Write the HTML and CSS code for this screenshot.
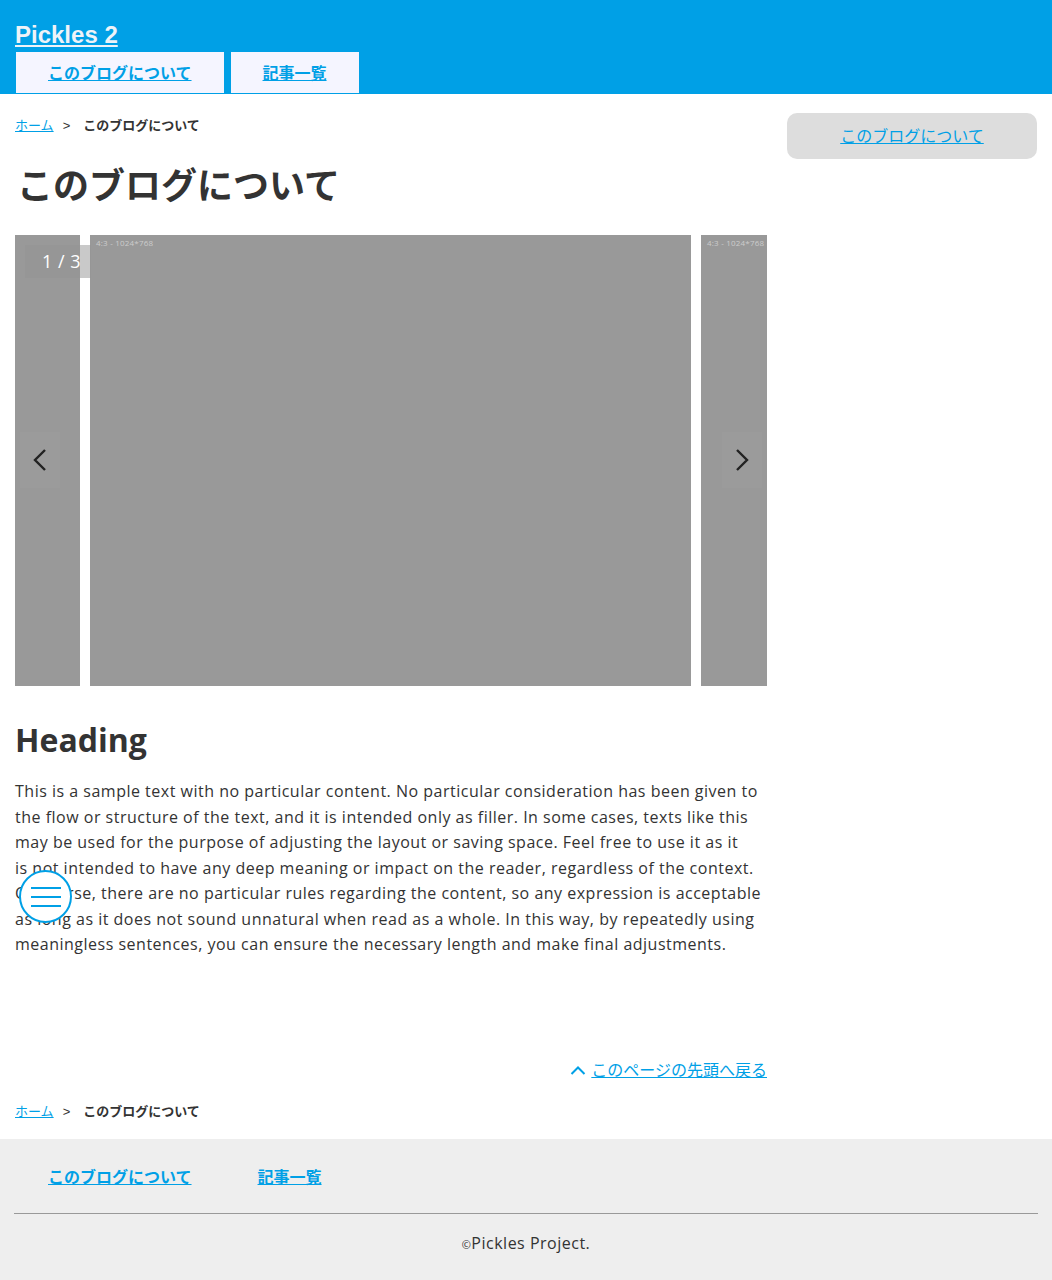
FILE: index.html
```html
<!DOCTYPE html>
<html lang="ja">
<head>
<meta charset="utf-8">
<title>このブログについて - Pickles 2</title>
<link rel="stylesheet" href="styles.css">
</head>
<body>
<header class="site-header">
  <div class="site-title"><a href="#">Pickles 2</a></div>
  <nav class="global-nav">
    <a class="tab" href="#">このブログについて</a>
    <a class="tab" href="#">記事一覧</a>
  </nav>
</header>

<div class="page">
  <main class="main">
    <div class="breadcrumb">
      <a href="#">ホーム</a><span class="sep">&gt;</span><strong>このブログについて</strong>
    </div>
    <h1 class="page-title">このブログについて</h1>

    <div class="carousel">
      <div class="track">
        <div class="slide"></div>
        <div class="slide"><span class="slide-label">4:3 - 1024*768</span></div>
        <div class="slide"><span class="slide-label">4:3 - 1024*768</span></div>
      </div>
      <div class="counter">1 / 3</div>
      <button class="arrow arrow-prev" aria-label="前へ">
        <svg width="16" height="24" viewBox="0 0 16 24"><path d="M13 2 L3 12 L13 22" fill="none" stroke="#222" stroke-width="2.4"/></svg>
      </button>
      <button class="arrow arrow-next" aria-label="次へ">
        <svg width="16" height="24" viewBox="0 0 16 24"><path d="M3 2 L13 12 L3 22" fill="none" stroke="#222" stroke-width="2.4"/></svg>
      </button>
    </div>

    <h2 class="heading">Heading</h2>
    <p class="body-text">This is a sample text with no particular content. No particular consideration has been given to the flow or structure of the text, and it is intended only as filler. In some cases, texts like this may be used for the purpose of adjusting the layout or saving space. Feel free to use it as it<br>is not intended to have any deep meaning or impact on the reader, regardless of the context. Of course, there are no particular rules regarding the content, so any expression is acceptable as long as it does not sound unnatural when read as a whole. In this way, by repeatedly using meaningless sentences, you can ensure the necessary length and make final adjustments.</p>

    <div class="back-to-top">
      <svg width="16" height="10" viewBox="0 0 16 10"><path d="M1.5 9 L8 2.5 L14.5 9" fill="none" stroke="#00a0e6" stroke-width="2"/></svg>
      <a href="#">このページの先頭へ戻る</a>
    </div>

    <div class="breadcrumb breadcrumb-bottom">
      <a href="#">ホーム</a><span class="sep">&gt;</span><strong>このブログについて</strong>
    </div>
  </main>

  <aside class="sidebar">
    <div class="side-box"><a href="#">このブログについて</a></div>
  </aside>
</div>

<footer class="site-footer">
  <nav class="footer-nav">
    <a href="#">このブログについて</a>
    <a href="#">記事一覧</a>
  </nav>
  <hr class="footer-rule">
  <div class="copyright"><span class="copy-mark">©</span>Pickles Project.</div>
</footer>

<button class="menu-button" aria-label="メニュー">
  <span></span><span></span><span></span>
</button>
</body>
</html>
```

FILE: styles.css
```css
* { box-sizing: border-box; }

html, body {
  margin: 0;
  padding: 0;
}

body {
  font-family: "Open Sans", "Noto Sans CJK JP", sans-serif;
  color: #333;
  background: #fff;
  font-size: 16px;
  line-height: 1.6;
}

a { color: #00a0e6; }

.site-header {
  background: #00a0e6;
  padding: 17px 15px 1px;
}

.site-title {
  font-family: "Liberation Sans", "Noto Sans CJK JP", sans-serif;
  font-size: 24px;
  font-weight: bold;
  line-height: 35px;
}

.site-title a {
  color: #eef3f8;
}

.global-nav {
  display: flex;
  gap: 7px;
  padding-left: 1px;
}

.tab {
  display: block;
  background: #f5f5ff;
  padding: 1px 32px 0;
  height: 41px;
  line-height: 40px;
  font-weight: bold;
  font-size: 16px;
}

.page {
  display: flex;
  gap: 20px;
  padding: 19px 15px 0;
}

.main {
  width: 752px;
  flex: none;
}

.sidebar {
  width: 250px;
  flex: none;
}

.breadcrumb {
  font-size: 13px;
  line-height: 24px;
}

.breadcrumb .sep {
  font-family: "Liberation Sans", sans-serif;
  margin: 0 13px 0 9px;
}

.breadcrumb strong {
  font-weight: bold;
}

.page-title {
  font-size: 36px;
  line-height: 47px;
  margin: 24px 0 26px;
  padding-left: 2px;
  font-weight: bold;
}

.carousel {
  position: relative;
  height: 451px;
  overflow: hidden;
}

.track {
  display: flex;
  gap: 10px;
  margin-left: -536px;
}

.slide {
  flex: none;
  width: 601px;
  height: 451px;
  background: #999;
  position: relative;
}

.slide-label {
  position: absolute;
  left: 6px;
  top: 3px;
  font-size: 8px;
  line-height: 10px;
  letter-spacing: 0.2px;
  color: #ccc;
}

.counter {
  position: absolute;
  left: 10px;
  top: 10px;
  height: 33px;
  line-height: 33px;
  padding: 0 10px 0 17px;
  font-size: 18px;
  letter-spacing: 0.5px;
  color: #fff;
  background: rgba(148, 148, 148, 0.5);
}

.arrow {
  position: absolute;
  top: 197px;
  width: 40px;
  height: 56px;
  border: 0;
  padding: 0;
  background: rgba(255, 255, 255, 0.02);
  display: flex;
  align-items: center;
  justify-content: center;
}

.arrow-prev { left: 5px; }
.arrow-next { right: 5px; }

.heading {
  font-size: 32px;
  line-height: 44px;
  margin: 32px 0 17px;
  font-weight: bold;
}

.body-text {
  margin: 0;
  line-height: 25.5px;
  letter-spacing: 0.5px;
}

.back-to-top {
  display: flex;
  justify-content: flex-end;
  align-items: center;
  gap: 5px;
  margin-top: 99px;
  line-height: 26px;
}

.breadcrumb-bottom {
  margin-top: 16px;
}

.side-box {
  background: #ddd;
  border-radius: 10px;
  height: 46px;
  padding-top: 2px;
  display: flex;
  align-items: center;
  justify-content: center;
}

.site-footer {
  background: #eee;
  margin-top: 15px;
  padding: 23px 0 22px;
}

.footer-nav {
  display: flex;
  padding-left: 15px;
}

.footer-nav a {
  padding: 0 33px;
  font-weight: bold;
  line-height: 30px;
}

.footer-rule {
  border: 0;
  border-top: 1px solid #999;
  margin: 21px 14px 0;
}

.copyright {
  text-align: center;
  padding-top: 16px;
  line-height: 26px;
  letter-spacing: 0.5px;
}

.copy-mark {
  font-size: 11px;
}

.menu-button {
  position: fixed;
  left: 19px;
  top: 870px;
  width: 53px;
  height: 53px;
  border-radius: 50%;
  border: 2px solid #00a0e6;
  background: #fff;
  padding: 0;
  display: flex;
  flex-direction: column;
  align-items: center;
  justify-content: center;
  gap: 7px;
}

.menu-button span {
  display: block;
  width: 30px;
  height: 2px;
  background: #00a0e6;
}
```
